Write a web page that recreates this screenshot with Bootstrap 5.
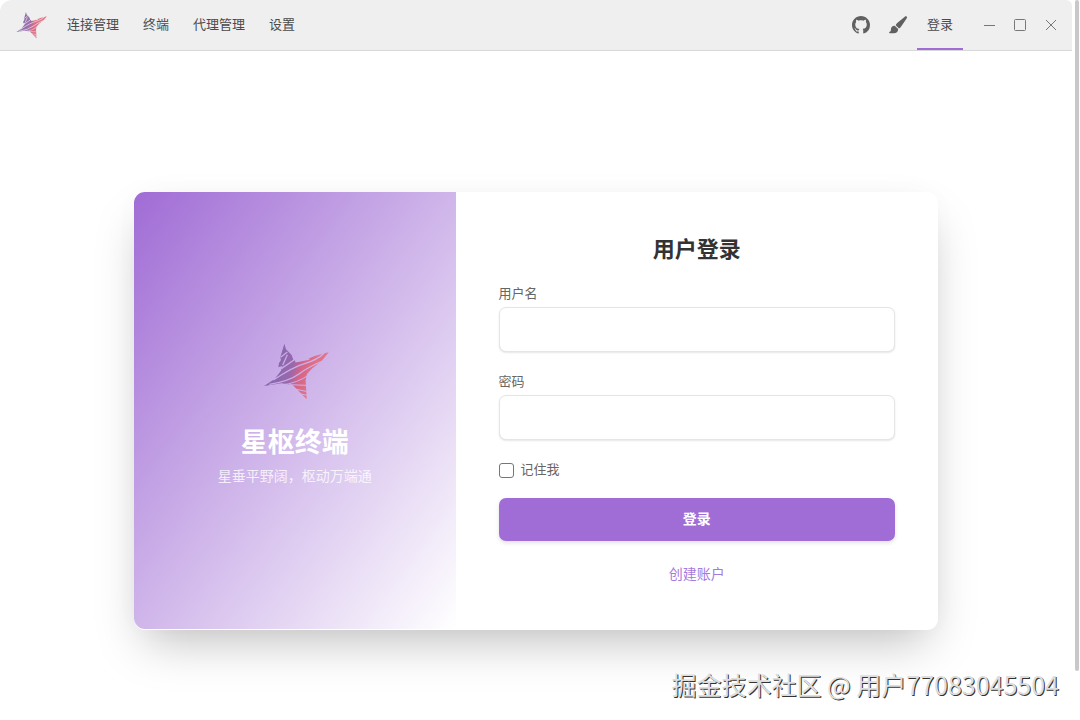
<!DOCTYPE html>
<html lang="zh-CN">
<head>
<meta charset="utf-8">
<meta name="viewport" content="width=device-width, initial-scale=1">
<title>星枢终端</title>
<link href="https://cdn.jsdelivr.net/npm/bootstrap@5.3.0/dist/css/bootstrap.min.css" rel="stylesheet">
<style>
  :root { --brand: #a06cd5; --ink: #4a4a4a; }
  body { font-family: "Liberation Sans", "Noto Sans CJK SC", sans-serif; font-size: 13px; line-height: 20px; color: var(--ink); background: #fff; }
  .app-bar { height: 51px; background: #efefef; border-bottom: 1px solid #d8d8d8; border-top-left-radius: 12px; border-top-right-radius: 6px; padding-left: 14px; padding-right: 6px; }
  .app-links { gap: 24px; margin-left: 19px; }
  .app-links a, .login-tab { color: var(--ink); text-decoration: none; }
  .tool-btn { width: 37px; }
  .win-btn { width: 31px; }
  .login-tab { width: 46px; margin-left: 1px; margin-right: 10px; height: 50px; border-top: 2px solid transparent; border-bottom: 2px solid var(--brand); }
  .login-area { padding-top: 141px; padding-bottom: 35px; }
  .login-card { width: 75%; min-width: 320px; border-radius: 11px; box-shadow: 0 22px 45px -11px rgba(0,0,0,.25), 0 0 30px rgba(0,0,0,.02); background: #fff; }
  .hero-pane { background: linear-gradient(to bottom right, var(--brand), #fff); border-radius: 11px 0 0 11px; margin-bottom: 1px; }
  .hero-pane h1 { font-size: 27px; line-height: 40px; margin: 16px 0 3px; }
  .hero-pane p { font-size: 14px; color: rgba(255,255,255,.8); }
  .hero-pane h1, .form-pane h2, .submit-btn { font-weight: 700; }
  .form-pane { padding: 43px 43px 45px; }
  .form-pane h2 { font-size: 22px; line-height: 30px; margin-bottom: 19px; color: #333; }
  .form-pane .form-label { margin-bottom: 3px; color: #666; }
  .form-pane .form-control { height: 45px; border-color: #e5e5e5; border-radius: 7px; box-shadow: 0 1px 2px rgba(0,0,0,.1); margin-bottom: 20px; }
  .remember { gap: 7px; margin-bottom: 18px; color: #666; }
  .remember .form-check-input { width: 15px; height: 15px; border: 1px solid #767676; border-radius: 3px; }
  .submit-btn { height: 43px; font-size: 14px; border-radius: 7px; background: var(--brand); color: #fff; box-shadow: 0 2px 4px rgba(0,0,0,.12); margin-bottom: 22px; }
  .submit-btn:hover { background: #8f58c8; color: #fff; }
  .create-link { font-size: 14px; line-height: 22px; color: #a47bdc; text-decoration: none; }
  .credit { font-family: "Noto Sans CJK SC", sans-serif; font-size: 25px; line-height: 38px; padding-right: 13px; color: #dedede; text-shadow: 1px 1px 0 #333; }
  .scroll-rail { width: 8px; padding: 0 1px 0 3px; }
  .scroll-thumb { height: 671px; border-radius: 2px; background: #c8c8c8; }
</style>
</head>
<body>
<svg class="position-absolute" width="0" height="0" aria-hidden="true">
  <defs>
    <linearGradient id="starInk" gradientUnits="userSpaceOnUse" x1="80" y1="100" x2="190" y2="130">
      <stop offset="0" stop-color="#8060a8"/><stop offset=".42" stop-color="#9460a4"/><stop offset=".66" stop-color="#d65c7c"/><stop offset="1" stop-color="#e26c7c"/>
    </linearGradient>
    <mask id="starCuts" maskUnits="userSpaceOnUse" x="27" y="15" width="216" height="216">
      <path fill="#fff" d="M27 15h216v216H27z"/>
      <g fill="none" stroke="#000" stroke-width="4">
        <path d="M92 82l20-16M98 106l14-32M94 116l38-26"/>
        <path d="M70 150q60-40 96-50t56-30"/>
        <path d="M58 163q60-10 90-32t70-38"/>
        <path d="M136 95l42-8" stroke-width="5"/>
        <path d="M92 165q50-4 90-34" stroke-width="3"/>
        <path d="M118 164l50 2M134 177l34 7M150 191l20 5" stroke-width="3"/>
      </g>
    </mask>
  </defs>
  <symbol id="star" viewBox="27 15 216 216">
    <path mask="url(#starCuts)" fill="url(#starInk)" fill-opacity=".9" d="M103 41l5 17 17 17 5 14 10 6 28-6 26-11 42-11-21 26-28 22-16 17-4 19 3 57-18-19-24-24-34-5-52 8 32-21 19-25 4-14-12 4 2-13 6-9-2-8z"/>
  </symbol>
</svg>
<div class="d-flex">
  <div class="flex-grow-1">
    <header class="app-bar d-flex align-items-center">
      <svg width="34" height="34" role="img" aria-label="星枢终端"><use href="#star"/></svg>
      <nav class="app-links d-flex me-auto" aria-label="主菜单">
        <a href="#connections">连接管理</a>
        <a href="#terminal">终端</a>
        <a href="#proxy">代理管理</a>
        <a href="#settings">设置</a>
      </nav>
      <button type="button" class="tool-btn btn p-0 border-0 d-flex justify-content-center" aria-label="GitHub">
        <svg width="18" height="18" viewBox="0 0 16 16" fill="#606060"><path d="M8 0C3.58 0 0 3.58 0 8c0 3.54 2.29 6.53 5.47 7.59.4.07.55-.17.55-.38 0-.19-.01-.82-.01-1.49-2.01.37-2.53-.49-2.69-.94-.09-.23-.48-.94-.82-1.13-.28-.15-.68-.52-.01-.53.63-.01 1.08.58 1.23.82.72 1.21 1.87.87 2.33.66.07-.52.28-.87.51-1.07-1.78-.2-3.64-.89-3.64-3.95 0-.87.31-1.59.82-2.15-.08-.2-.36-1.02.08-2.12 0 0 .67-.21 2.2.82.64-.18 1.32-.27 2-.27s1.36.09 2 .27c1.53-1.04 2.2-.82 2.2-.82.44 1.1.16 1.92.08 2.12.51.56.82 1.27.82 2.15 0 3.07-1.87 3.75-3.65 3.95.29.25.54.73.54 1.48 0 1.07-.01 1.93-.01 2.2 0 .21.15.46.55.38A8.01 8.01 0 0 0 16 8c0-4.42-3.58-8-8-8z"/></svg>
      </button>
      <button type="button" class="tool-btn btn p-0 border-0 d-flex justify-content-center" aria-label="主题">
        <svg width="18" height="18" viewBox="0 0 18 18" fill="#606060"><path d="M17.6.5c.7.6.4 1.4 0 2.1L12 10.8c-.5.7-1.2 1.3-2 1.6L6.7 9.2c.3-.9.8-1.6 1.5-2.2L15.8.7c.6-.5 1.2-.6 1.8-.2z"/><path d="M5.7 9.8 9.1 13c.1 2.7-1.6 4.3-4.5 4.3H.9c-1 0-1-1.3-.2-1.5 1-.3 1.2-1 1.2-2.4 0-2.2 1.6-3.7 3.8-3.6z"/></svg>
      </button>
      <a class="login-tab d-flex align-items-center justify-content-center" href="#login" aria-current="page">登录</a>
      <button type="button" class="win-btn btn p-0 border-0 d-flex justify-content-center" aria-label="最小化"><svg width="12" height="12" stroke="#777"><path d="M1 6.5h11"/></svg></button>
      <button type="button" class="win-btn btn p-0 border-0 d-flex justify-content-center" aria-label="最大化"><svg width="12" height="12" fill="none" stroke="#777"><rect x=".5" y=".5" width="11" height="11" rx="1"/></svg></button>
      <button type="button" class="win-btn btn p-0 border-0 d-flex justify-content-center" aria-label="关闭"><svg width="12" height="12" stroke="#777"><path d="m1 1 10 10M11 1 1 11"/></svg></button>
    </header>
    <main class="login-area">
      <div class="login-card mx-auto">
        <div class="row g-0">
          <section class="hero-pane col-12 col-md d-flex flex-column align-items-center justify-content-center text-white">
            <svg width="72" height="72" aria-hidden="true"><use href="#star"/></svg>
            <h1>星枢终端</h1>
            <p class="mb-0">星垂平野阔，枢动万端通</p>
          </section>
          <form class="form-pane col-12 col-md-7 flex-md-shrink-0" style="width:60%">
            <h2 class="text-center">用户登录</h2>
            <label class="form-label d-block" for="user">用户名</label>
            <input class="form-control" type="text" id="user" autocomplete="username">
            <label class="form-label d-block" for="pass">密码</label>
            <input class="form-control" type="password" id="pass" autocomplete="current-password">
            <div class="remember d-flex align-items-center">
              <input class="form-check-input m-0" type="checkbox" id="remember">
              <label for="remember">记住我</label>
            </div>
            <button type="submit" class="submit-btn btn border-0 w-100 p-0">登录</button>
            <div class="text-center"><a class="create-link d-inline-block align-top" href="#register">创建账户</a></div>
          </form>
        </div>
      </div>
    </main>
    <footer class="credit text-end">掘金技术社区 @ 用户77083045504</footer>
  </div>
  <div class="scroll-rail" aria-hidden="true"><div class="scroll-thumb"></div></div>
</div>
<script src="https://cdn.jsdelivr.net/npm/bootstrap@5.3.0/dist/js/bootstrap.bundle.min.js"></script>
</body>
</html>
